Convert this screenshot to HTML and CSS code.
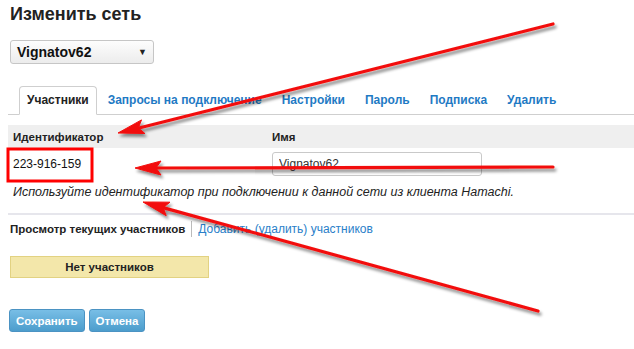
FILE: index.html
```html
<!DOCTYPE html>
<html lang="ru">
    <head>
        <meta charset="UTF-8" />
        <meta name="viewport" content="width=device-width, initial-scale=1.0" />
        <title>Изменить сеть</title>

        <link rel="stylesheet" href="styles.css">
    </head>

    <body>
        <div class="page">
            <h1 class="title">Изменить сеть</h1>

            <div class="select">
                <span>Vignatov62</span>
                <span class="caret">&#9660;</span>
            </div>

            <ul class="tabs">
                <li class="active"><a href="#">Участники</a></li>
                <li><a href="#">Запросы на подключение</a></li>
                <li><a href="#">Настройки</a></li>
                <li><a href="#">Пароль</a></li>
                <li><a href="#">Подписка</a></li>
                <li><a href="#">Удалить</a></li>
            </ul>

            <div class="grid head">
                <div>Идентификатор</div>
                <div>Имя</div>
            </div>
            <div class="grid row">
                <div class="net-id">223-916-159</div>
                <div><input type="text" value="Vignatov62" /></div>
            </div>
            <p class="hint">Используйте идентификатор при подключении к данной сети из клиента Hamachi.</p>

            <div class="subnav">
                <span class="current">Просмотр текущих участников</span>
                <a href="#">Добавить (удалить) участников</a>
            </div>

            <div class="empty">Нет участников</div>

            <div class="actions">
                <button>Сохранить</button>
                <button>Отмена</button>
            </div>
        </div>

        <!-- annotation arrows drawn over the page -->
        <svg class="marks" viewBox="0 0 634 349" width="634" height="349">
            <defs>
                <filter id="shadow" x="-10%" y="-10%" width="120%" height="140%">
                    <feDropShadow dx="2" dy="3" stdDeviation="1.8" flood-color="#000" flood-opacity="0.45" />
                </filter>
            </defs>
            <rect x="8" y="149" width="84" height="32" fill="none" stroke="#f00" stroke-width="3" />
            <g filter="url(#shadow)" fill="#f2100c" stroke="#f2100c">
                <line x1="553" y1="24" x2="139" y2="128" stroke-width="3.2" stroke-linecap="round" />
                <polygon points="118,133 144.9,133.5 138.4,127.9 141.5,119.9" stroke-width="1" stroke-linejoin="round" />

                <line x1="553" y1="167" x2="156" y2="168" stroke-width="3.2" stroke-linecap="round" />
                <polygon points="135,168 161,161 156,168 161,175" stroke-width="1" stroke-linejoin="round" />

                <line x1="538" y1="311" x2="163" y2="207.6" stroke-width="3.2" stroke-linecap="round" />
                <polygon points="143,202 170,202.2 163.2,207.6 166.2,215.7" stroke-width="1" stroke-linejoin="round" />
            </g>
        </svg>
    </body>
</html>
```

FILE: styles.css
```css
* {
    margin: 0;
    padding: 0;
    box-sizing: border-box;
}

body {
    background-color: #fff;
    color: #222;
    font-family: "Liberation Sans", Arial, sans-serif;
    font-size: 12px;
    width: 634px;
    height: 349px;
    overflow: hidden;
    position: relative;
}

a {
    text-decoration: none;
}

.page {
    padding-left: 8px;
}

.title {
    margin-top: 2px;
    padding-left: 2px;
    font-size: 18px;
    font-weight: bold;
    line-height: 24px;
    color: #222;
}

.select {
    margin: 14px 0 0 2px;
    width: 144px;
    height: 24px;
    padding: 0 6px 0 6px;
    display: flex;
    align-items: center;
    justify-content: space-between;
    border: 1px solid #c6c6c6;
    border-radius: 3px;
    background: linear-gradient(#fdfdfd, #ececec);
    font-size: 14px;
    font-weight: bold;
    color: #111;
}

.caret {
    font-size: 9px;
    color: #222;
}

.tabs {
    margin-top: 22px;
    padding-left: 11px;
    display: flex;
    list-style: none;
    border-bottom: 1px solid #cfcfcf;
}

.tabs li {
    margin-bottom: -1px;
    margin-right: 2px;
    border: 1px solid transparent;
    border-radius: 4px 4px 0 0;
}

.tabs li a {
    display: block;
    padding: 0 8px;
    line-height: 27px;
    font-size: 12px;
    font-weight: bold;
    color: #1f7ac4;
}

.tabs li.active {
    border-color: #cfcfcf;
    border-bottom-color: #fff;
    background-color: #fff;
}

.tabs li.active a {
    color: #222;
    padding: 0 7px;
}

.grid {
    display: grid;
    grid-template-columns: 264px 1fr;
}

.grid > div {
    padding-left: 5px;
}

.head {
    margin-top: 10px;
    height: 23px;
    align-items: center;
    background-color: #efefef;
    font-size: 11.5px;
    font-weight: bold;
    color: #222;
}

.head > div + div,
.row > div + div {
    padding-left: 0;
}

.row {
    padding: 4px 0;
    align-items: center;
}

.net-id {
    font-size: 12px;
    color: #111;
}

.row input {
    width: 210px;
    height: 24px;
    padding: 0 6px;
    border: 1px solid #c9c9c9;
    border-radius: 3px;
    font-family: "Liberation Sans", Arial, sans-serif;
    font-size: 12px;
    color: #333;
}

.hint {
    margin-top: 4px;
    padding-left: 5px;
    line-height: 16px;
    font-size: 12.5px;
    font-style: italic;
    color: #222;
}

.subnav {
    margin-top: 13px;
    border-top: 2px solid #e6e6ec;
    padding: 6px 0 0 2px;
    line-height: 16px;
    display: flex;
    align-items: center;
}

.current {
    font-size: 11.5px;
    font-weight: bold;
    color: #222;
    padding-right: 6px;
    border-right: 1px solid #bbb;
}

.subnav a {
    padding-left: 6px;
    color: #2a80c9;
}

.empty {
    margin: 19px 0 0 2px;
    width: 199px;
    height: 22px;
    line-height: 20px;
    text-align: center;
    border: 1px solid #e2d282;
    background-color: #f3e7aa;
    font-size: 11.5px;
    font-weight: bold;
    color: #222;
}

.actions {
    margin: 31px 0 0 1px;
    display: flex;
    gap: 4px;
}

.actions button {
    height: 23px;
    padding: 0 6px;
    border: 1px solid #4b93c3;
    border-radius: 3px;
    background: linear-gradient(#78bee6, #4c9dcc);
    color: #fff;
    font-family: "Liberation Sans", Arial, sans-serif;
    font-size: 11.5px;
    font-weight: bold;
    cursor: pointer;
}

.marks {
    position: absolute;
    top: 0;
    left: 0;
    pointer-events: none;
}
```
